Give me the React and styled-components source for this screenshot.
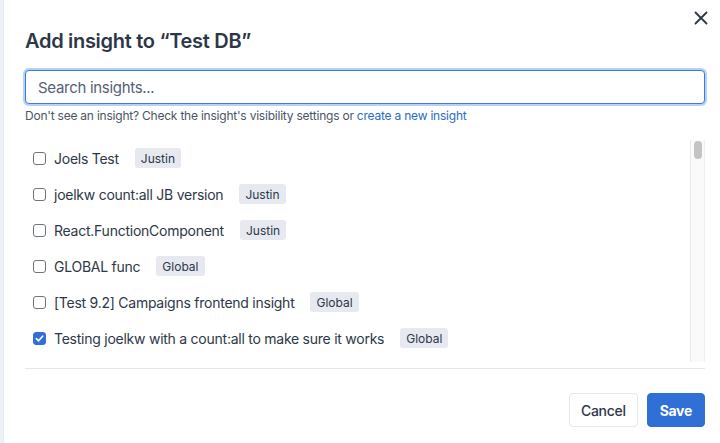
import React from "react";
import styled, { createGlobalStyle } from "styled-components";

const GlobalStyle = createGlobalStyle`
    html, body {
        margin: 0;
        padding: 0;
        background: #ffffff;
    }
    body {
        font-family: Inter, "Noto Sans", "Liberation Sans", sans-serif;
        color: #2d3748;
    }
`;

const insights = [
    { name: "Joels Test", owner: "Justin" },
    { name: "joelkw count:all JB version", owner: "Justin" },
    { name: "React.FunctionComponent", owner: "Justin" },
    { name: "GLOBAL func", owner: "Global" },
    { name: "[Test 9.2] Campaigns frontend insight", owner: "Global" },
    { name: "Testing joelkw with a count:all to make sure it works", owner: "Global", checked: true },
];

const Page = styled.div`
    display: flex;
    height: 443px;
    width: 720px;
    overflow: hidden;
`;

const Backdrop = styled.div`
    width: 3px;
    background: #eef1f6;
    border-right: 1px solid #e6e9ef;
`;

const Modal = styled.div`
    position: relative;
    flex: 1;
    display: flex;
    flex-direction: column;
    padding: 27px 15px 0 21px;
    background: #ffffff;
`;

const CloseButton = styled.button`
    position: absolute;
    top: 8px;
    right: 9px;
    width: 20px;
    height: 20px;
    display: flex;
    align-items: center;
    justify-content: center;
    padding: 0;
    border: none;
    background: transparent;
    color: #2d3748;
`;

const Title = styled.h2`
    margin: 0;
    font-size: 20px;
    line-height: 28px;
    font-weight: 600;
    letter-spacing: -0.3px;
    color: #2d3748;
`;

const SearchInput = styled.input`
    box-sizing: border-box;
    margin-top: 15px;
    width: 100%;
    height: 34px;
    padding: 0 12px;
    border: 1px solid #3b7be0;
    border-radius: 4px;
    box-shadow: 0 0 0 2px rgba(96, 150, 235, 0.45);
    outline: none;
    font-family: inherit;
    font-size: 15px;
    letter-spacing: -0.3px;
    color: #2d3748;
    &::placeholder {
        color: #566076;
    }
`;

const HelpText = styled.p`
    margin: 4px 0 0;
    font-size: 12px;
    line-height: 16px;
    letter-spacing: -0.22px;
    color: #4a5568;
`;

const Link = styled.a`
    color: #2b6cc4;
    text-decoration: none;
`;

const ScrollArea = styled.div`
    margin-top: 16px;
    height: 222px;
    display: flex;
`;

const Items = styled.div`
    flex: 1;
    overflow: hidden;
    padding-left: 8px;
`;

const ScrollTrack = styled.div`
    box-sizing: border-box;
    width: 15px;
    padding: 1px 2px 0 3px;
    background: #fafafa;
    border-left: 1px solid #e8e8e8;
    border-right: 1px solid #efefef;
`;

const ScrollThumb = styled.div`
    height: 18px;
    border-radius: 5px;
    background: #c3c3c3;
`;

const Row = styled.label`
    display: flex;
    align-items: center;
    height: 36px;
    font-size: 14px;
    letter-spacing: -0.25px;
    color: #2d3748;
`;

const Box = styled.span`
    box-sizing: border-box;
    width: 13px;
    height: 13px;
    flex-shrink: 0;
    display: flex;
    align-items: center;
    justify-content: center;
    border-radius: 3px;
    border: 1px solid ${(p) => (p.$checked ? "#2f6fd6" : "#6f737a")};
    background: ${(p) => (p.$checked ? "#2f6fd6" : "#ffffff")};
`;

const Name = styled.span`
    margin-left: 8px;
    white-space: nowrap;
`;

const Badge = styled.span`
    margin-left: 16px;
    height: 20px;
    padding: 0 6px;
    display: inline-flex;
    align-items: center;
    border-radius: 3px;
    background: #e6e9f0;
    font-size: 12px;
    font-weight: 400;
    letter-spacing: 0;
    color: #2d3748;
`;

const Divider = styled.hr`
    margin: 6px 0 0;
    border: none;
    border-top: 1px solid #e4e7ec;
`;

const Footer = styled.div`
    display: flex;
    justify-content: flex-end;
    gap: 9px;
    padding-top: 24px;
`;

const Button = styled.button`
    height: 34px;
    padding: 0 ${(p) => (p.$primary ? 12 : 11)}px;
    border-radius: 4px;
    font-family: inherit;
    font-size: 14px;
    letter-spacing: -0.3px;
    font-weight: ${(p) => (p.$primary ? 700 : 500)};
    border: 1px solid ${(p) => (p.$primary ? "#2f6fd6" : "#e2e6ee")};
    background: ${(p) => (p.$primary ? "#2f6fd6" : "#ffffff")};
    color: ${(p) => (p.$primary ? "#ffffff" : "#2d3748")};
`;

const Check = () => (
    <svg width="9" height="9" viewBox="0 0 10 10">
        <path d="M1.5 5.2 L4 7.6 L8.5 2.4" fill="none" stroke="#fff" strokeWidth="1.8" strokeLinecap="round" strokeLinejoin="round" />
    </svg>
);

const CloseIcon = () => (
    <svg width="14" height="14" viewBox="0 0 14 14">
        <path d="M1.5 1.5 L12.5 12.5 M12.5 1.5 L1.5 12.5" stroke="currentColor" strokeWidth="1.8" strokeLinecap="round" />
    </svg>
);

const InsightRow = ({ insight }) => (
    <Row>
        <Box $checked={insight.checked}>{insight.checked && <Check />}</Box>
        <Name>{insight.name}</Name>
        <Badge>{insight.owner}</Badge>
    </Row>
);

export default function App() {
    return (
        <Page>
            <GlobalStyle />
            <Backdrop />
            <Modal>
                <CloseButton aria-label="Close">
                    <CloseIcon />
                </CloseButton>
                <Title>Add insight to “Test DB”</Title>
                <SearchInput placeholder="Search insights..." />
                <HelpText>
                    Don't see an insight? Check the insight's visibility settings or{" "}
                    <Link href="#">create a new insight</Link>
                </HelpText>
                <ScrollArea>
                    <Items>
                        {insights.map((insight, i) => (
                            <InsightRow key={i} insight={insight} />
                        ))}
                    </Items>
                    <ScrollTrack>
                        <ScrollThumb />
                    </ScrollTrack>
                </ScrollArea>
                <Divider />
                <Footer>
                    <Button>Cancel</Button>
                    <Button $primary>Save</Button>
                </Footer>
            </Modal>
        </Page>
    );
}
